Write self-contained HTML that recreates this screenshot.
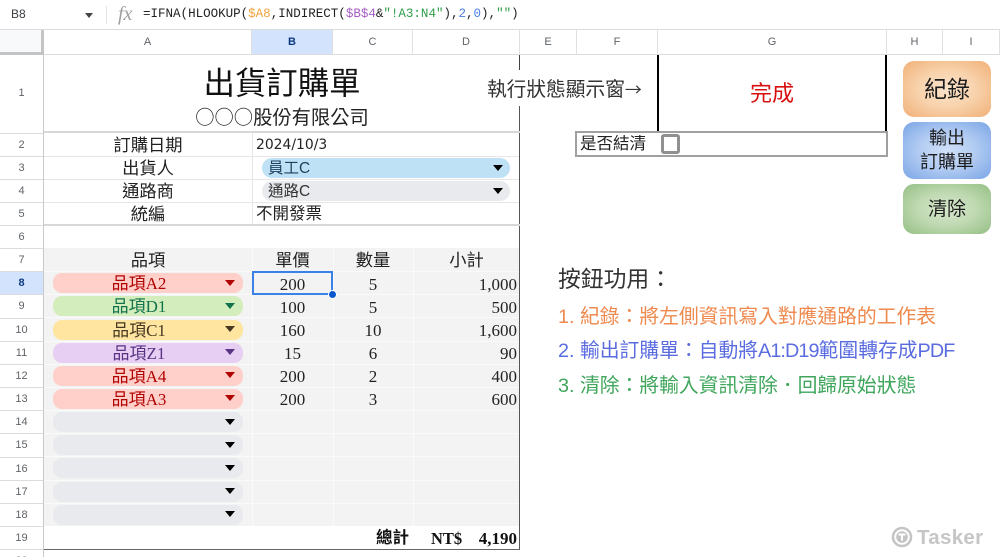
<!DOCTYPE html>
<html><head><meta charset="utf-8"><style>
html,body{margin:0;padding:0;background:#fff}
#p{position:relative;width:1000px;height:557px;overflow:hidden;background:#fff;font-family:"Liberation Sans","Noto Sans CJK TC",sans-serif}
#p div{position:absolute;white-space:nowrap;box-sizing:border-box}
.rh{left:0;width:43px;text-align:center;font-size:11px;color:#5f6368;height:23px;line-height:23px;background:#fff;border-bottom:1px solid #dadce0}
.ch{top:30px;height:25px;line-height:24px;text-align:center;font-size:11px;color:#5f6368;border-right:1px solid #e0e0e0;border-bottom:1px solid #dadce0;background:#fff}
.z{font-family:"Liberation Serif","Noto Sans CJK TC",serif;font-size:17px;color:#222;height:23px;line-height:23px;text-align:center}
.l{font-family:"Liberation Sans","Noto Sans CJK TC",sans-serif;font-size:17.3px;color:#222;left:44px;width:208px;height:23px;line-height:25px;text-align:center}
.g{background:#f3f3f3}
.hl{height:1px;left:44px;width:475px;background:#fafafa}
.vl{width:1px;top:248px;height:278px;background:#fafafa}
.c{left:53px;width:190px;height:20px;border-radius:9px;background:#e8eaed;font-family:"Liberation Serif","Noto Sans CJK TC",serif;font-size:17px;line-height:22px;text-align:center;padding-right:18px}
.a{left:225px;width:0;height:0;border-left:5px solid transparent;border-right:5px solid transparent;border-top:6px solid #000}
.B{left:252px;width:81px}.C{left:333px;width:80px}.D{left:413px;width:104px;text-align:right}
.btn{left:903px;width:88px;border-radius:11px;text-align:center;font-family:"Liberation Sans","Noto Sans CJK TC",sans-serif;color:#1c1c1c}
.inf{left:558px;font-size:19.8px;height:28px;line-height:28px;font-family:"Liberation Sans","Noto Sans CJK TC",sans-serif}
.n{letter-spacing:-.9px}
.cjk{font-family:"Noto Sans CJK TC",sans-serif}
</style></head><body><div id="p">

<!-- formula bar -->
<div style="left:0;top:0;width:1000px;height:30px;background:#fff;border-bottom:1px solid #dadce0"></div>
<div style="left:11px;top:6px;font-size:12px;line-height:17px;color:#3c4043">B8</div>
<div style="left:85px;top:13px;width:0;height:0;border-left:4.5px solid transparent;border-right:4.5px solid transparent;border-top:5px solid #444"></div>
<div style="left:106px;top:6px;width:1px;height:18px;background:#e3e3e3"></div>
<div style="left:118px;top:3px;font-family:'Liberation Serif',serif;font-style:italic;font-size:20px;line-height:22px;color:#a0a0a0">fx</div>
<div style="left:143px;top:6px;font-family:'Liberation Mono',monospace;font-size:12.53px;line-height:16px;color:#222">=IFNA(HLOOKUP(<span style="color:#f1a33c">$A8</span>,INDIRECT(<span style="color:#a55fc4">$B$4</span>&amp;<span style="color:#2e9e48">"!A3:N4"</span>),<span style="color:#4a7fe0">2</span>,<span style="color:#4a7fe0">0</span>),<span style="color:#2e9e48">""</span>)</div>

<!-- column headers -->
<div style="left:0;top:30px;width:44px;height:25px;background:#f8f9fa;border-right:3px solid #c4c4c4;border-bottom:3px solid #c4c4c4"></div>
<div class="ch" style="left:44px;width:208px">A</div>
<div class="ch" style="left:252px;width:81px;background:#d3e3fd;color:#0b3a80;font-weight:bold">B</div>
<div class="ch" style="left:333px;width:80px">C</div>
<div class="ch" style="left:413px;width:107px">D</div>
<div class="ch" style="left:520px;width:57px">E</div>
<div class="ch" style="left:577px;width:81px">F</div>
<div class="ch" style="left:658px;width:229px">G</div>
<div class="ch" style="left:887px;width:56px">H</div>
<div class="ch" style="left:943px;width:57px">I</div>

<!-- row headers -->
<div class="rh" style="top:55px;height:79px;line-height:77px">1</div>
<div class="rh" style="top:134px">2</div>
<div class="rh" style="top:157px">3</div>
<div class="rh" style="top:180px">4</div>
<div class="rh" style="top:203px">5</div>
<div class="rh" style="top:226px">6</div>
<div class="rh" style="top:249px">7</div>
<div class="rh" style="top:272px;background:#d3e3fd;color:#0b3a80;font-weight:bold">8</div>
<div class="rh" style="top:295px;height:24px">9</div>
<div class="rh" style="top:319px">10</div>
<div class="rh" style="top:342px">11</div>
<div class="rh" style="top:365px">12</div>
<div class="rh" style="top:388px">13</div>
<div class="rh" style="top:411px">14</div>
<div class="rh" style="top:434px;height:24px">15</div>
<div class="rh" style="top:458px">16</div>
<div class="rh" style="top:481px">17</div>
<div class="rh" style="top:504px">18</div>
<div class="rh" style="top:527px">19</div>
<div class="rh" style="top:550px;border:0">20</div>
<div style="left:43px;top:55px;width:1px;height:502px;background:#c8c8c8"></div>

<!-- title block -->
<div style="left:44px;top:63px;width:476px;text-align:center;font-size:31.4px;line-height:42px;color:#111">出貨訂購單</div>
<div style="left:44px;top:102px;width:476px;text-align:center;font-size:19.3px;line-height:28px;color:#222"><span class="cjk">○○○</span>股份有限公司</div>
<div style="left:487px;top:75px;font-size:19.7px;line-height:28px;color:#333;background:#fff">執行狀態顯示窗<span class="cjk" style="font-size:17px">→</span></div>

<!-- right border D -->
<div style="left:519px;top:55px;width:1px;height:15px;background:#444"></div>
<div style="left:519px;top:106px;width:1px;height:443px;background:#555"></div>
<div style="left:44px;top:131px;width:476px;height:2px;background:#d8d8d8"></div>
<div style="left:44px;top:224px;width:476px;height:2px;background:#d8d8d8"></div>

<!-- info rows -->
<div style="left:44px;top:156px;width:475px;height:1px;background:#e6e6e6"></div>
<div style="left:44px;top:179px;width:475px;height:1px;background:#e6e6e6"></div>
<div style="left:44px;top:202px;width:475px;height:1px;background:#e6e6e6"></div>
<div style="left:252px;top:133px;width:1px;height:91px;background:#e6e6e6"></div>
<div class="l" style="top:133px">訂購日期</div>
<div class="l" style="top:156px">出貨人</div>
<div class="l" style="top:179px">通路商</div>
<div class="l" style="top:202px">統編</div>
<div style="left:256px;top:134px;line-height:23px;color:#222;font-family:'DejaVu Sans',sans-serif;font-size:13.9px">2024/10/3</div>
<div style="left:256px;top:203px;font-size:16.5px;line-height:23px;color:#222">不開發票</div>
<div style="left:262px;top:158px;width:248px;height:20px;border-radius:10px;background:#bfe1f6"></div>
<div style="left:268px;top:158px;font-size:15.5px;line-height:22px;color:#1f3f5f">員工C</div>
<div class="a" style="left:493px;top:165px"></div>
<div style="left:262px;top:181px;width:248px;height:20px;border-radius:10px;background:#e8eaed"></div>
<div style="left:268px;top:181px;font-size:15.5px;line-height:22px;color:#333">通路C</div>
<div class="a" style="left:493px;top:188px"></div>

<!-- table background -->
<div class="g" style="left:44px;top:248px;width:475px;height:278px"></div>
<div class="vl" style="left:252px"></div>
<div class="vl" style="left:333px"></div>
<div class="vl" style="left:413px"></div>
<div class="hl" style="top:271px"></div><div class="hl" style="top:294px"></div><div class="hl" style="top:317px"></div><div class="hl" style="top:341px"></div><div class="hl" style="top:364px"></div><div class="hl" style="top:387px"></div><div class="hl" style="top:410px"></div><div class="hl" style="top:433px"></div><div class="hl" style="top:456px"></div><div class="hl" style="top:480px"></div><div class="hl" style="top:503px"></div>

<div class="l" style="top:248px">品項</div>
<div class="l" style="left:252px;width:81px;top:248px">單價</div>
<div class="l" style="left:333px;width:80px;top:248px">數量</div>
<div class="l" style="left:413px;width:107px;top:248px">小計</div>

<!-- chips -->
<div class="c" style="top:273px;background:#ffcfc9;color:#b10202">品項A2</div><div class="a" style="top:280px;border-top-color:#b10202"></div>
<div class="c" style="top:296px;background:#d4edbc;color:#11734b">品項D1</div><div class="a" style="top:303px;border-top-color:#11734b"></div>
<div class="c" style="top:320px;background:#ffe5a0;color:#473821">品項C1</div><div class="a" style="top:326px;border-top-color:#473821"></div>
<div class="c" style="top:343px;background:#e6cff2;color:#5a3286">品項Z1</div><div class="a" style="top:349px;border-top-color:#5a3286"></div>
<div class="c" style="top:366px;background:#ffcfc9;color:#b10202">品項A4</div><div class="a" style="top:372px;border-top-color:#b10202"></div>
<div class="c" style="top:389px;background:#ffcfc9;color:#b10202">品項A3</div><div class="a" style="top:395px;border-top-color:#b10202"></div>
<div class="c" style="top:412px"></div><div class="a" style="top:419px"></div>
<div class="c" style="top:435px"></div><div class="a" style="top:442px"></div>
<div class="c" style="top:458px"></div><div class="a" style="top:465px"></div>
<div class="c" style="top:482px"></div><div class="a" style="top:488px"></div>
<div class="c" style="top:505px"></div><div class="a" style="top:511px"></div>

<!-- numbers -->
<div class="z B" style="top:273px">200</div><div class="z C" style="top:273px">5</div><div class="z D" style="top:273px">1,000</div>
<div class="z B" style="top:296px">100</div><div class="z C" style="top:296px">5</div><div class="z D" style="top:296px">500</div>
<div class="z B" style="top:319px">160</div><div class="z C" style="top:319px">10</div><div class="z D" style="top:319px">1,600</div>
<div class="z B" style="top:342px">15</div><div class="z C" style="top:342px">6</div><div class="z D" style="top:342px">90</div>
<div class="z B" style="top:365px">200</div><div class="z C" style="top:365px">2</div><div class="z D" style="top:365px">400</div>
<div class="z B" style="top:388px">200</div><div class="z C" style="top:388px">3</div><div class="z D" style="top:388px">600</div>

<!-- total -->
<div style="left:44px;top:549px;width:476px;height:1px;background:#666"></div>
<div style="left:376px;top:527px;font-size:16.5px;line-height:23px;font-weight:bold;color:#111">總計</div>
<div style="left:431px;top:527px;font-family:'Liberation Serif',serif;font-size:16.5px;line-height:23px;font-weight:bold;color:#111">NT$</div>
<div style="left:413px;width:104px;text-align:right;top:527px;font-family:'Liberation Serif',serif;font-size:17px;line-height:23px;font-weight:bold;color:#111">4,190</div>

<!-- selection -->
<div style="left:252px;top:271px;width:81px;height:24px;border:2px solid #3b82e6"></div>
<div style="left:328px;top:290px;width:9px;height:9px;border-radius:50%;background:#0b57d0;border:1px solid #fff"></div>

<!-- status -->
<div style="left:657px;top:55px;width:2px;height:78px;background:#000"></div>
<div style="left:885px;top:55px;width:2px;height:78px;background:#000"></div>
<div style="left:658px;top:77px;width:228px;text-align:center;font-size:22px;line-height:34px;color:#d81010">完成</div>
<div style="left:575px;top:131px;width:313px;height:26px;border:2px solid #a0a0a0"></div>
<div style="left:580px;top:132px;font-size:16.5px;line-height:24px;color:#222">是否結清</div>
<div style="left:661px;top:134px;width:19px;height:20px;border:3px solid #909090;border-radius:3px;background:#fff"></div>

<!-- buttons -->
<div class="btn" style="top:61px;height:56px;background:radial-gradient(ellipse at center,#fbe3ca 0%,#f8d3ad 45%,#f0b077 100%);font-size:23px;line-height:56px">紀錄</div>
<div class="btn" style="top:122px;height:57px;background:radial-gradient(ellipse at center,#cfe0f8 0%,#b2ccf2 45%,#7aa5e6 100%);font-size:18px;line-height:23.5px;padding-top:5px">輸出<br>訂購單</div>
<div class="btn" style="top:184px;height:50px;background:radial-gradient(ellipse at center,#d5e6cc 0%,#c1dab3 45%,#94bf84 100%);font-size:19px;line-height:52px">清除</div>

<!-- info text -->
<div style="left:558px;top:262px;font-size:22.8px;line-height:34px;color:#333">按鈕功用：</div>
<div class="inf" style="top:303px;color:#ef8a4f">1. 紀錄：將左側資訊寫入對應通路的工作表</div>
<div class="inf" style="top:337px;color:#5a6ce0">2. 輸出訂購單：自動將<span class="n">A1:D19</span>範圍轉存成<span class="n">PDF</span></div>
<div class="inf" style="top:372px;color:#3fa65c">3. 清除：將輸入資訊清除．回歸原始狀態</div>

<!-- logo -->
<svg style="position:absolute;left:891px;top:526px" width="22" height="22" viewBox="0 0 22 22"><circle cx="11" cy="11" r="9" fill="none" stroke="#c4c4c4" stroke-width="2.5"/><circle cx="11" cy="11" r="5.8" fill="#c4c4c4"/><path d="M7.5 8.5h7M11 8.5v6" stroke="#fff" stroke-width="2" fill="none"/></svg>
<div style="left:917px;top:525px;font-size:20.5px;line-height:25px;font-weight:bold;color:#c6c6c6;letter-spacing:.3px">Tasker</div>

</div></body></html>
